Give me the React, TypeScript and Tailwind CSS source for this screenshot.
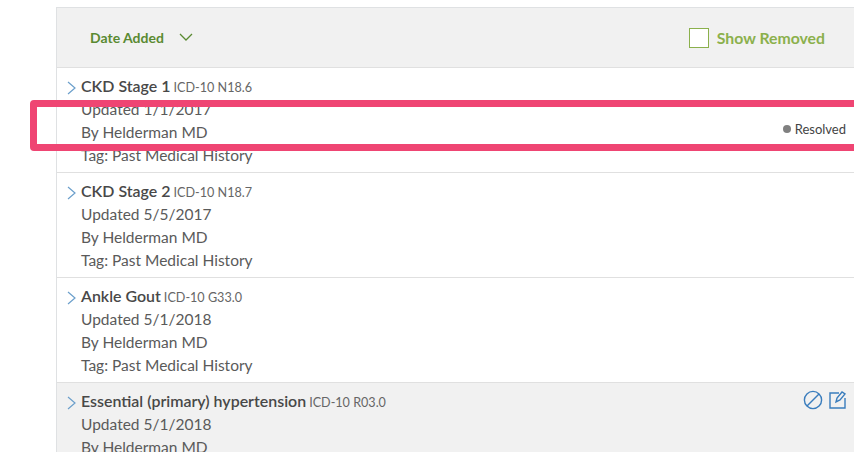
const rows = [
  { name: 'CKD Stage 1', code: 'ICD-10 N18.6', updated: '1/1/2017', tag: true },
  { name: 'CKD Stage 2', code: 'ICD-10 N18.7', updated: '5/5/2017', tag: true },
  { name: 'Ankle Gout', code: 'ICD-10 G33.0', updated: '5/1/2018', tag: true },
  { name: 'Essential (primary) hypertension', code: 'ICD-10 R03.0', updated: '5/1/2018', tag: false },
]

function Chevron() {
  return (
    <svg width="10" height="14" viewBox="0 0 10 14" fill="none" stroke="#6b9fcb" strokeWidth="1.2" className="mt-[7px] shrink-0">
      <path d="M1 1l7 6-7 6" />
    </svg>
  )
}

export default function App() {
  return (
    <div className="relative h-[452px] w-[854px] overflow-hidden bg-white pl-[56px] pt-[7px] font-['Lato','Open_Sans',sans-serif] text-[15.5px] leading-[23px] text-[#5a5a5a]">
      <div className="border-l border-t border-[#dfe1e3]">
        <div className="flex h-[60px] items-center justify-between border-b border-[#e0e0e0] bg-[#f1f1f1] pl-[33px] pr-[29px]">
          <div className="flex items-center gap-[15px]">
            <span className="text-[14px] font-bold text-[#5a8a32]">Date Added</span>
            <svg width="14" height="9" viewBox="0 0 14 9" fill="none" stroke="#5a8a32" strokeWidth="1.3">
              <path d="M1 1l6 6 6-6" />
            </svg>
          </div>
          <label className="flex items-center gap-[8px]">
            <span className="h-[20px] w-[20px] border border-[#8bb04c] bg-white" />
            <span className="text-[15.8px] font-bold text-[#8bb04c]">Show Removed</span>
          </label>
        </div>
        {rows.map((row, i) => (
          <div
            key={row.name}
            className={`relative flex h-[105px] gap-[4px] border-b border-[#e0e0e0] pl-[10px] pt-[6px] ${i === 3 ? 'bg-[#f1f1f1]' : 'bg-white'}`}
          >
            <Chevron />
            <div>
              <div className="flex h-[24px] items-baseline gap-[3px]">
                <span className="text-[15.95px] font-semibold text-[#484848]">{row.name}</span>
                <span className="text-[12.6px] text-[#666]">{row.code}</span>
              </div>
              <div>Updated {row.updated}</div>
              <div>By Helderman MD</div>
              {row.tag && <div>Tag: Past Medical History</div>}
            </div>
            {i === 0 && (
              <div className="absolute right-[8px] top-[51px] flex items-center gap-[4px] text-[13px] leading-[20px] text-[#444]">
                <span className="h-[8px] w-[8px] rounded-full bg-[#808080]" />
                Resolved
              </div>
            )}
            {i === 3 && (
              <div className="absolute right-[7px] top-[7px] flex items-center gap-[6px] text-[#3a7dbd]">
                <svg width="20" height="20" viewBox="0 0 20 20" fill="none" stroke="currentColor" strokeWidth="1.4">
                  <circle cx="10" cy="10" r="8.6" />
                  <path d="M4 16L16 4" />
                </svg>
                <svg width="18" height="20" viewBox="0 0 18 20" fill="none" stroke="currentColor" strokeWidth="1.4">
                  <path d="M10 3H1v15h15V8" />
                  <path d="M7 12l1-4 5-6 3 2-5 6z" />
                </svg>
              </div>
            )}
          </div>
        ))}
      </div>
      <div className="absolute left-[30px] top-[100px] h-[51px] w-[860px] rounded-[4px] border-[7px] border-[#ef4573]" />
    </div>
  )
}
